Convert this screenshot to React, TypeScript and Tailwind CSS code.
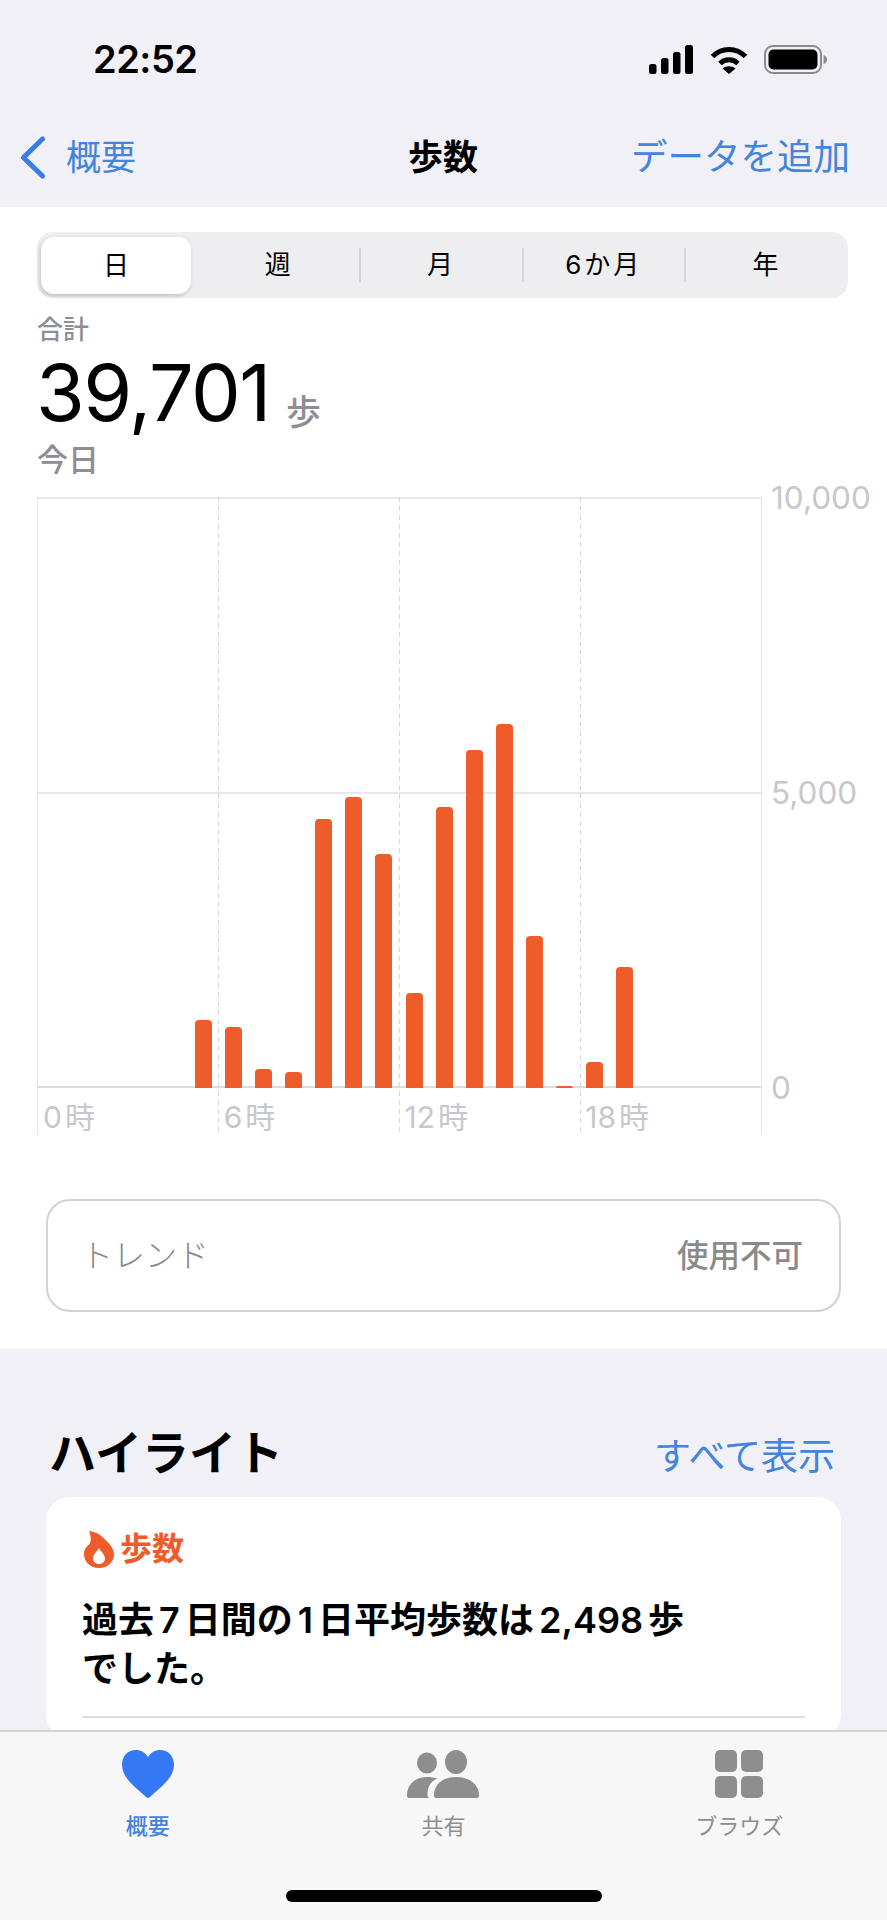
const tabs = ['週', '月', '6か月', '年'];

// hour -> bar height in px (baseline to top)
const bars: Record<number, number> = {
  5: 68, 6: 61, 7: 19, 8: 16, 9: 269, 10: 291, 11: 234, 12: 95,
  13: 281, 14: 338, 15: 364, 16: 152, 17: 2, 18: 26, 19: 121,
};
const hours = Array.from({ length: 24 }, (_, i) => i);

function StatusIcons() {
  return (
    <div className="flex items-center gap-[17px]">
      <svg width="44" height="29" viewBox="0 0 44 29" fill="#000">
        <rect x="0" y="19" width="7.5" height="10" rx="2.5" />
        <rect x="12" y="13" width="7.5" height="16" rx="2.5" />
        <rect x="24" y="7" width="7.5" height="22" rx="2.5" />
        <rect x="36" y="0" width="8" height="29" rx="2.5" />
      </svg>
      <svg width="38" height="29" viewBox="0 0 38 29" fill="none" stroke="#000" strokeWidth="5">
        <path d="M2.5 11.5C11.5 2 26.5 2 35.5 11.5" />
        <path d="M10 18.5C15 13.5 23 13.5 28 18.5" />
        <path d="M12.5 23.5C16 20.5 22 20.5 25.5 23.5L19 29Z" fill="#000" stroke="none" />
      </svg>
      <svg width="63" height="29" viewBox="0 0 63 29" className="-ml-px">
        <rect x="1" y="1" width="56" height="27" rx="8" fill="none" stroke="#8a8a8e" strokeWidth="2" />
        <rect x="4.5" y="4.5" width="49" height="20" rx="5" fill="#000" />
        <path d="M59.5 10C62 11 63 12.5 63 14.5C63 16.5 62 18 59.5 19Z" fill="#8a8a8e" />
      </svg>
    </div>
  );
}

function FlameIcon() {
  return (
    <svg width="30" height="37" viewBox="0 0 30 37" className="ml-[2px]">
      <path
        fill="#ee5c2a"
        fillRule="evenodd"
        d="M5 0C13 1 17 4 21.5 9C26.5 14 30 18 30 23.5C30 31 23.5 37 15 37C6.5 37 0 31 0 23C0 18.5 2.5 15.5 5.5 13C7.5 10 7 5 5 0ZM15 17C12.5 21 9 23.5 9 27.5C9 30.5 11.5 33 15 33C18.5 33 21 30.5 21 27.5C21 23.5 17 21 15 17Z"
      />
    </svg>
  );
}

export default function App() {
  return (
    <div className="flex h-[1920px] w-[887px] flex-col overflow-hidden bg-[#f0f0f6] font-['Inter','Noto_Sans_CJK_JP',sans-serif]">
      {/* Status bar + nav */}
      <header className="h-[207px] shrink-0 bg-[#f0f0f6]">
        <div className="flex h-[118px] items-center justify-between pl-[93px] pr-[60px]">
          <span className="text-[38px] font-semibold leading-none tracking-[-0.5px] text-black">22:52</span>
          <StatusIcons />
        </div>
        <div className="flex h-[78px] items-center justify-between pl-[20px] pr-[37px]">
          <div className="flex w-[236px] items-center gap-[20px] text-[#4484dc]">
            <svg width="26" height="43" viewBox="0 0 26 43" fill="none" stroke="#3a7be6" strokeWidth="5" strokeLinecap="round" strokeLinejoin="round">
              <path d="M22.5 3L3.5 21.5L22.5 40" />
            </svg>
            <span className="text-[35px] leading-none">概要</span>
          </div>
          <span className="text-[35px] font-bold leading-none text-black">歩数</span>
          <span className="w-[220px] whitespace-nowrap text-right text-[36.5px] leading-none text-[#4484dc]">データを追加</span>
        </div>
      </header>

      <main className="min-h-0 flex-1 overflow-hidden">
        {/* White upper section */}
        <section className="h-[1142px] bg-white pl-[37px] pt-[25px]">
          <div className="grid h-[66px] w-[811px] grid-cols-5 items-center rounded-[16px] bg-[#eeeef0]">
            <div className="ml-[4px] flex h-[57px] w-[150px] items-center justify-center rounded-[13px] bg-white text-[26px] text-black shadow-[-1px_2px_4px_rgba(0,0,0,0.2)]">
              日
            </div>
            {tabs.map((t, i) => (
              <div key={t} className="flex items-center">
                <span className="flex-1 text-center text-[26px] leading-none tracking-[3px] text-black">{t}</span>
                {i < 3 && <span className="h-[34px] w-[2px] bg-[#d6d6da]" />}
              </div>
            ))}
          </div>

          {/* Total */}
          <p className="mt-[14px] text-[26px] font-medium leading-[36px] text-[#8e8e93]">合計</p>
          <div className="mt-[2px] flex h-[84px] items-end">
            <span className="-ml-px text-[79px] font-normal leading-[84px] tracking-[-1.5px] text-black">39,701</span>
            <span className="mb-[2px] ml-[16px] text-[35px] font-medium leading-[40px] text-[#8e8e93]">歩</span>
          </div>
          <p className="mt-[6px] text-[31px] font-medium leading-[40px] text-[#8e8e93]">今日</p>

          {/* Chart */}
          <div className="mt-[17px] flex">
            <div className="relative h-[637px] w-[725px] shrink-0 border-x border-[#e4e4e6]">
              <div className="absolute inset-x-0 top-0 border-t-2 border-[#e8e8ea]" />
              <div className="absolute inset-x-0 top-[295px] border-t-2 border-[#e8e8ea]" />
              <div className="absolute inset-x-0 top-[589px] border-t-2 border-[#dcdcde]" />
              <div className="absolute bottom-0 left-[180px] top-0 w-px bg-[repeating-linear-gradient(to_bottom,#d8d8da_0,#d8d8da_5px,transparent_5px,transparent_9px)]" />
              <div className="absolute bottom-0 left-[361px] top-0 w-px bg-[repeating-linear-gradient(to_bottom,#d8d8da_0,#d8d8da_5px,transparent_5px,transparent_9px)]" />
              <div className="absolute bottom-0 left-[542px] top-0 w-px bg-[repeating-linear-gradient(to_bottom,#d8d8da_0,#d8d8da_5px,transparent_5px,transparent_9px)]" />

              <div className="relative grid h-[591px] grid-cols-[repeat(24,minmax(0,1fr))] items-end">
                {hours.map((h) => (
                  <div key={h} className="flex justify-center">
                    {bars[h] ? (
                      <div className="-ml-px w-[17px] rounded-t-[4px] bg-[#ee5c2a]" style={{ height: bars[h] }} />
                    ) : null}
                  </div>
                ))}
              </div>

              <div className="grid grid-cols-4 pt-[11px] text-[30px] leading-[36px] text-[#c7c7cc]">
                {['0', '6', '12', '18'].map((h) => (
                  <span key={h} className="flex gap-[3px] pl-[5px]">
                    <span>{h}</span>
                    <span>時</span>
                  </span>
                ))}
              </div>
            </div>
            <div className="-mt-[17px] ml-[9px] flex h-[626px] flex-col justify-between text-[31.5px] leading-[36px] text-[#c7c7cc]">
              <span>10,000</span>
              <span>5,000</span>
              <span>0</span>
            </div>
          </div>

          {/* Trend */}
          <div className="ml-[9px] mt-[65px] flex h-[113px] w-[795px] items-center justify-between rounded-[24px] border-2 border-[#d2d2d4] pl-[33px] pr-[36px] text-[#8a8a8a]">
            <span className="text-[32px] font-light">トレンド</span>
            <span className="text-[31.5px] font-medium">使用不可</span>
          </div>
        </section>

        {/* Highlights */}
        <section className="px-[46px] pt-[78px]">
          <div className="flex items-end justify-between pb-[18px]">
            <h2 className="ml-[3px] text-[47px] font-bold leading-[52px] text-black">ハイライト</h2>
            <span className="mr-[6px] text-[37px] leading-[44px] text-[#4484dc]">すべて表示</span>
          </div>
          <div className="rounded-[24px] bg-white px-[36px] pt-[32px]">
            <div className="flex h-[40px] items-center gap-[6px]">
              <FlameIcon />
              <span className="text-[32px] font-semibold leading-none text-[#ee5c2a]">歩数</span>
            </div>
            <p className="mt-[27px] text-[36px] font-semibold leading-[49px] text-black">
              過去<span className="mx-[5px]">7</span>日間の<span className="mx-[5px]">1</span>日平均歩数は
              <span className="mx-[5px]">2,498</span>歩
              <br />
              でした。
            </p>
            <div className="mt-[22px] border-t-2 border-[#dedee0]" />
            <div className="h-[20px]" />
          </div>
        </section>
      </main>

      {/* Tab bar */}
      <nav className="flex h-[190px] shrink-0 flex-col border-t-2 border-[#d2d2d4] bg-[#f7f7f7]">
        <div className="grid grid-cols-3 pt-[18px] text-[22px] leading-[28px]">
          <div className="flex flex-col items-center gap-[14px] text-[#4484dc]">
            <svg width="52" height="48" viewBox="0 0 52 48" fill="#3478f6">
              <path d="M26 48C25 48 23 46 18 41.5C8 33 0 25 0 14.5C0 6 6 0 14 0C19 0 23 2.5 26 7C29 2.5 33 0 38 0C46 0 52 6 52 14.5C52 25 44 33 34 41.5C29 46 27 48 26 48Z" />
            </svg>
            <span className="font-medium">概要</span>
          </div>
          <div className="flex flex-col items-center gap-[14px] text-[#8e8e8e]">
            <svg width="72" height="48" viewBox="0 0 72 48" fill="#8e8e8e">
              <ellipse cx="20" cy="13" rx="10" ry="10.5" />
              <ellipse cx="49" cy="12" rx="11" ry="12" />
              <path d="M29 48H70C71.5 48 72 47 72 45.5C72 34 62 27 49 27C36 27 27 34 27 45.5C27 47 27.5 48 29 48Z" />
              <path d="M2 48H22C20.5 47 20.5 46 20.5 44C20.5 37 23.5 31.5 30 28.5C27 27.5 24 27 20 27C8 27 0 34.5 0 45.5C0 47 .5 48 2 48Z" />
            </svg>
            <span>共有</span>
          </div>
          <div className="flex flex-col items-center gap-[14px] text-[#8e8e8e]">
            <div className="grid h-[48px] w-[48px] grid-cols-2 gap-[4px]">
              <span className="rounded-[5px] bg-[#8e8e8e]" />
              <span className="rounded-[5px] bg-[#8e8e8e]" />
              <span className="rounded-[5px] bg-[#8e8e8e]" />
              <span className="rounded-[5px] bg-[#8e8e8e]" />
            </div>
            <span>ブラウズ</span>
          </div>
        </div>
        <div className="mx-auto mb-[18px] mt-auto h-[12px] w-[316px] rounded-full bg-black" />
      </nav>
    </div>
  );
}
